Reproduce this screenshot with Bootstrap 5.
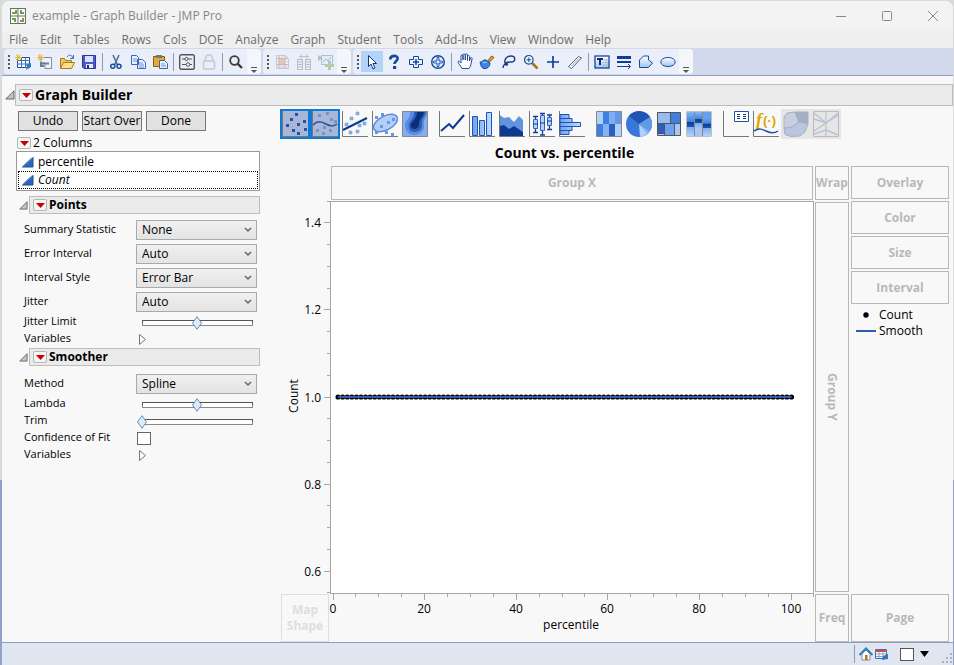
<!DOCTYPE html>
<html lang="en">
<head>
<meta charset="utf-8">
<meta name="viewport" content="width=device-width, initial-scale=1">
<title>example - Graph Builder - JMP Pro</title>
<link href="https://cdn.jsdelivr.net/npm/bootstrap@5.3.0/dist/css/bootstrap.min.css" rel="stylesheet">
<style>
body{font:12px/16px "Open Sans","Noto Sans",sans-serif;color:#000;background:linear-gradient(#d9dade 0 480px,#93a0c8 480px);padding:1px 1px 0 2px}
button{font:inherit;color:inherit;padding:0;border:0;background:none}
svg{display:block;flex:none}
.win{min-height:calc(100vh - 1px);background:#f8f8f8;border-radius:8px 8px 0 0;overflow:hidden}
.titlebar{height:30px;background:#f3f3f3;color:#868686;padding-left:8px;gap:6px}
.titlebar button{width:40px;height:30px}
.menus{height:17px;background:#efefef;padding-left:7px;gap:12px}
.menus a{color:#6d6d6d;text-decoration:none}
.toolbars{height:28px;background:#d3d9ec;border-bottom:1px solid #8f9cc4;gap:2px;padding-left:2px}
.tb{height:25px;background:#e9eef8;border-radius:4px;margin-top:1px}
.tb button{width:22px;height:21px}
.tb .on{background:#b3d3f8}
.tb .off{opacity:.4}
.grip{width:8px;height:14px;background:repeating-linear-gradient(#555 0 2px,transparent 2px 4px) 4px 0/2px 14px no-repeat}
.vsep{width:5px;height:18px;background:linear-gradient(#8e9ab8,#8e9ab8) 2px 0/1px 18px no-repeat}
.tb .more{width:14px;height:25px;background:#f3f6fb;border-radius:0 4px 4px 0}
.workarea{padding:8px 0 0 3px}
.outline-bar{background:#ebebeb;border:1px solid #bdbdbd;font-weight:700;gap:2px;padding-left:3px}
.outline-bar.big{height:22px;font-size:14px}
.outline-bar.sub{height:18px;font-size:12px}
.subhead{padding-left:2px;gap:1px}
.redtri{width:14px;height:12px;border:1px solid #b5b5b5;border-radius:2px;background:#f4f4f4;display:flex;align-items:center;justify-content:center}
.side{width:243px;margin-left:12px}
.pushes{padding:5px 0 4px 1px}
.pushbtn{width:60px;height:20px;background:#e1e1e1;border:1px solid #777;line-height:16px;white-space:nowrap}
.colhead{gap:2px}
.cols-list{border:1px solid #999;background:#fff;margin:0 0 5px -1px;padding:1px}
.cols-list button{height:18px;padding-left:3px;gap:4px;text-align:left}
.cols-list .cur{border:1px dotted #000;font-style:italic;padding-left:2px}
.smoothprops{padding-top:6px}
.prop{padding-left:7px;height:24px}
.prop.thin{height:17px}
.prop label,.prop .lab{width:112px;font-size:11px;line-height:14px;padding-bottom:3px;white-space:nowrap}
.prop button{margin-left:2px}
.prop select{width:121px;height:20px;border:1px solid #a9a9a9;border-radius:0;color:#000;font:12px/16px "Open Sans",sans-serif;padding:0 0 0 5px;appearance:none;background:url("data:image/svg+xml,%3Csvg xmlns='http://www.w3.org/2000/svg' width='8' height='6'%3E%3Cpath d='M1 1l3 3 3-3' fill='none' stroke='%23666' stroke-width='1.5'/%3E%3C/svg%3E") right 4px center no-repeat,linear-gradient(#f0f0f0,#e3e3e3)}
.prop input[type=range]{appearance:none;width:122px;height:14px;margin:0;background:linear-gradient(#fff,#fff) center/calc(100% - 13px) 4px no-repeat,linear-gradient(#555 0 3px,#888 3px) center/calc(100% - 11px) 6px no-repeat}
.prop input[type=range]::-webkit-slider-thumb{appearance:none;width:12px;height:14px;background:url("data:image/svg+xml,%3Csvg xmlns='http://www.w3.org/2000/svg' width='12' height='14'%3E%3Cpath d='M6 .7L10.500 7 6 13.300 1.500 7z' fill='%23dcebf9' stroke='%236e8fb3'/%3E%3C/svg%3E")}
.prop input[type=checkbox]{appearance:none;width:14px;height:13px;border:1px solid #666;background:#fff;margin:0 0 0 1px}
.graph{margin-left:20px;margin-right:4px;min-width:0}
.elems{height:34px;padding-top:3px}
.elems button{width:30px;height:30px;padding:2px}
.elems .on{background:#a9b6d6;outline:2px solid #0f7ad6;outline-offset:-2px}
.elems .off{background:#e6e6e6}
.elems .gapr{margin-right:7px}
.gtitle{font-size:14px;line-height:20px;font-weight:700;margin:0 100px 0 0;padding:3px 0}
.zones{display:grid;grid-template-columns:48px minmax(0,1fr) 34px 98px;grid-template-rows:34px 1fr 48px;gap:2px;margin-left:1px}
.zone{border:1px solid #b8b8b8;color:#b8b8b8;font-weight:700;display:flex;align-items:center;justify-content:center;text-align:center}
.z-map{grid-column:1;grid-row:3;border-color:#dedede;color:#dedede}
.z-x{grid-column:2;grid-row:1}
.z-wrap{grid-column:3;grid-row:1}
.z-y{grid-column:3;grid-row:2;writing-mode:vertical-rl}
.z-freq{grid-column:3;grid-row:3}
.z-page{grid-column:4;grid-row:3}
.z-right{grid-column:4;grid-row:1/3;gap:2px}
.z-right .zone{height:33px}
.legend-list{line-height:16px;padding:1px 0 0 5px}
.legend-list svg{margin-right:3px}
.plot{grid-column:1/3;grid-row:2/4;width:100%;height:auto;overflow:visible}
.plot text{font:12px "Open Sans",sans-serif}
.status{height:23px;background:#dfe6f0;border-top:1px solid #8f9cc4;gap:2px}
.winpick{appearance:none;width:14px;height:13px;border:1px solid #555;background:#fff;margin:0 4px 0 10px}
.sizer{margin-left:8px}
</style>
</head>
<body>
<svg width="0" height="0" class="position-absolute" aria-hidden="true">
 <defs>
  <linearGradient id="b" x2="0" y2="1"><stop stop-color="#fff"/><stop offset="1" stop-color="#9cc4f5"/></linearGradient>
  <linearGradient id="hb" x2="1" y2="0"><stop stop-color="#6ea1f0"/><stop offset="1" stop-color="#c4dcff"/></linearGradient>
  <linearGradient id="st" x2="0" y2="1"><stop stop-color="#84b5f7"/><stop offset=".4" stop-color="#3f83dd"/><stop offset=".42" stop-color="#0b3c8c"/><stop offset=".62" stop-color="#1d56b0"/><stop offset=".64" stop-color="#7fadf0"/><stop offset="1" stop-color="#b4d1fb"/></linearGradient>
  <symbol id="tri" viewBox="0 0 10 10"><path d="M9 .8V9H.8z" fill="#c4c4c4" stroke="#666"/></symbol>
  <symbol id="red" viewBox="0 0 9 5"><path d="M0 0h9L4.500 5z" fill="#c80000"/></symbol>
  <symbol id="cont" viewBox="0 0 13 12"><path d="M12 1v10H1z" fill="#2f66b5" stroke="#1f4c90"/><path d="M1 11L12 1" stroke="#78aee8"/></symbol>
  <symbol id="play" viewBox="0 0 9 13"><path d="M1.500 1.500L7.500 6.500l-6 5z" fill="#fafafa" stroke="#777"/></symbol>
  <symbol id="ov" viewBox="0 0 8 8"><path d="M1 1.500h6" stroke="#555"/><path d="M1 4h6L4 7z" fill="#555"/></symbol>
 </defs>
</svg>
<div class="win d-flex flex-column">
 <header class="titlebar d-flex align-items-center">
  <svg width="16" height="16" viewBox="0 0 16 16"><rect x=".5" y=".5" width="15" height="15" fill="#fff" stroke="#6d6d6d"/><path d="M8 0v16M0 8h16" stroke="#6d6d6d"/><path d="M5 2h2v4H2V4h3zM10 2h2v2h2v2h-4zM2 10h4v4H4v-2H2zM12 10h2v4h-4v-2h2z" fill="#6fa43c"/></svg>
  <span class="me-auto">example - Graph Builder - JMP Pro</span>
  <button aria-label="Minimize"><svg class="m-auto" width="12" height="12"><path d="M1 6.500h10" stroke="#888"/></svg></button>
  <button aria-label="Maximize"><svg class="m-auto" width="12" height="12"><rect x="1.500" y="1.500" width="9" height="9" rx="1" fill="none" stroke="#888"/></svg></button>
  <button aria-label="Close"><svg class="m-auto" width="12" height="12"><path d="M1 1l10 10M11 1L1 11" stroke="#888"/></svg></button>
 </header>
 <nav class="menus d-flex align-items-center">
  <a href="#">File</a><a href="#">Edit</a><a href="#">Tables</a><a href="#">Rows</a><a href="#">Cols</a><a href="#">DOE</a><a href="#">Analyze</a><a href="#">Graph</a><a href="#">Student</a><a href="#">Tools</a><a href="#">Add-Ins</a><a href="#">View</a><a href="#">Window</a><a href="#">Help</a>
 </nav>
 <div class="toolbars d-flex">
  <div class="tb d-flex align-items-center"><span class="grip"></span>
   <button aria-label="New data table"><svg class="m-auto" width="16" height="16"><path d="M2.500 3.500h12v10h-12z" fill="#fff" stroke="#1c4c94"/><path d="M2 6.500h13M2 10h13M6.500 3v11M10.500 3v11" stroke="#3b70b8"/><path d="M3 0v7M0 3.500h7M1 1l5 5M6 1L1 6" stroke="#e8b820"/><path d="M11 16l1-4-2-1 6-2v4z" fill="#2f78c0"/></svg></button>
   <button aria-label="New script"><svg class="m-auto" width="16" height="16"><path d="M4 3.500h10.500v11H8V9H4z" fill="#eef3fa" stroke="#7c8ea8"/><path d="M4 9.500h8M4 8v4h3" stroke="#6a7e9c" stroke-width="2" fill="none"/><path d="M3 0v7M0 3.500h7M1 1l5 5M6 1L1 6" stroke="#e8b820"/></svg></button>
   <button aria-label="Open"><svg class="m-auto" width="16" height="16"><path d="M1.500 14V4.500h4l1 2h6V14z" fill="#f2c65a" stroke="#a87b1c"/><path d="M1.500 14.500L4.500 8.500h11L12.500 14.500z" fill="#fbe08c" stroke="#a87b1c"/><path d="M8 3c2-3 5-2 6 1M14.500 1v3.500H11" stroke="#3a6fae" fill="none"/></svg></button>
   <button aria-label="Save"><svg class="m-auto" width="16" height="16"><path d="M1.500 1.500h13v13H3L1.500 13z" fill="#4a58c8" stroke="#2d3796"/><path d="M4 2h8v6H4z" fill="#d5e4fb"/><path d="M5 10h7v4H5z" fill="#e8e8f4"/><path d="M6 11h2v3H6z" fill="#222b7c"/></svg></button>
   <span class="vsep"></span>
   <button aria-label="Cut"><svg class="m-auto" width="16" height="16" fill="none"><path d="M5 1l4.500 10M11 1L6.500 11" stroke="#55708f" stroke-width="1.600"/><circle cx="4.800" cy="12.300" r="2" stroke="#174c9c" stroke-width="1.500"/><circle cx="11" cy="12.300" r="2" stroke="#174c9c" stroke-width="1.500"/></svg></button>
   <button aria-label="Copy"><svg class="m-auto" width="16" height="16"><path d="M1.500 1.500h5l2 2v7h-7zM7.500 5.500h5l3 3v6h-8z" fill="#e8f1ff" stroke="#3468b4"/><path d="M3 5h4M3 7h4M9 9h4M9 11h5M9 13h5" stroke="#6a98d8"/></svg></button>
   <button aria-label="Paste"><svg class="m-auto" width="16" height="16"><path d="M1.500 2.500h11v10h-11z" fill="#e8a838" stroke="#8c5c10"/><path d="M4 1h6v3H4z" fill="#777"/><path d="M7.500 6.500h5l3 3v5h-8z" fill="#e8f1ff" stroke="#4a6288"/><path d="M9 10h4M9 12h5" stroke="#6a98d8"/></svg></button>
   <span class="vsep"></span>
   <button aria-label="Column switcher"><svg class="m-auto" width="16" height="16" fill="none" stroke="#555"><rect x=".7" y=".7" width="14.600" height="14.600" rx="1.500" stroke-width="1.400"/><path d="M3 5h3M9 5h4M3 10.500h4M11 10.500h2"/><circle cx="7.500" cy="5" r="1.600"/><circle cx="9" cy="10.500" r="1.800"/></svg></button>
   <button aria-label="Lock" disabled><svg class="m-auto" width="16" height="16" fill="none" stroke="#c3c8d2" stroke-width="1.500"><rect x="2.500" y="7" width="11" height="8" rx="1"/><path d="M4.500 7V4.500a3.500 3.500 0 017 0V7"/></svg></button>
   <span class="vsep"></span>
   <button aria-label="Search"><svg class="m-auto" width="16" height="16" fill="none" stroke="#3a3a3a"><circle cx="6.500" cy="6.500" r="4.300" stroke-width="1.800"/><path d="M9.800 9.800L14 14" stroke-width="2.400"/></svg></button>
   <button class="more d-flex align-items-end justify-content-center" aria-label="More"><svg width="8" height="8"><use href="#ov"/></svg></button>
  </div>
  <div class="tb d-flex align-items-center"><span class="grip"></span>
   <button class="off" aria-label="Row selection" disabled><svg class="m-auto" width="16" height="16"><path d="M2.500 1.500h9l3 3v10h-12z" fill="#eef" stroke="#8896b5"/><path d="M5 5h6v5H5z" fill="#f09030"/><path d="M3 4.500h11M3 10.500h11M5 2v12M11 2v12" stroke="#d04848"/><path d="M3 7.500h11M3 13h11M8 2v12" stroke="#7890c0" opacity=".6"/></svg></button>
   <button class="off" aria-label="Compare columns" disabled><svg class="m-auto" width="16" height="16" fill="none" stroke="#6c7a86"><rect x="1.500" y="5.500" width="5" height="10"/><rect x="9.500" y="5.500" width="5" height="10"/><path d="M2 8h4M2 10.500h4M2 13h4M10 8h4M10 10.500h4M10 13h4M3 2.500h10M5 .5v4M11 .5v4"/></svg></button>
   <button class="off" aria-label="Add to graph" disabled><svg class="m-auto" width="16" height="16"><path d="M3.500 1.500h11v9h-11z" fill="#ddebfa" stroke="#5777a0"/><path d="M5 8l3-3 2 2 3-4" stroke="#2f66b5" fill="none"/><path d="M0 1l5 3-5 3z" fill="#5a8f4a"/><path d="M11.500 7v9M7 11.500h9" stroke="#56a02e" stroke-width="3"/></svg></button>
   <button class="more d-flex align-items-end justify-content-center" aria-label="More"><svg width="8" height="8"><use href="#ov"/></svg></button>
  </div>
  <div class="tb d-flex align-items-center"><span class="grip"></span>
   <button class="on" aria-label="Arrow"><svg class="m-auto" width="16" height="16"><path d="M4.500 1.500v11l2.500-2.500 2 5 2-1-2-4.500h3.500z" fill="#fff" stroke="#17347a"/></svg></button>
   <button aria-label="Help"><svg class="m-auto" width="16" height="16" fill="none"><path d="M4.300 5.500C4 1 12 .7 11.700 4.700 11.500 7 8.500 7 8.500 10" stroke="#1546a0" stroke-width="2.600"/><path d="M7 12h3.200v3H7z" fill="#1546a0"/></svg></button>
   <button aria-label="Crosshair box"><svg class="m-auto" width="16" height="16"><path d="M5.500 2.500h5v3h4v5h-4v3h-5v-3h-4v-5h4z" fill="#e8f2ff" stroke="#1546a0"/><path d="M8 5v6M5 8h6" stroke="#1546a0" stroke-width="1.500"/></svg></button>
   <button aria-label="Scroller"><svg class="m-auto" width="16" height="16" fill="none" stroke="#1546a0"><circle cx="8" cy="8" r="6.300" fill="#e8f2ff" stroke-width="1.400"/><path d="M6 6h4v4H6z"/><path d="M8 2.500l2 2H6zM8 13.500l2-2H6zM2.500 8l2-2v4zM13.500 8l-2-2v4z" fill="#1546a0" stroke="none"/></svg></button>
   <span class="vsep"></span>
   <button aria-label="Grabber"><svg class="m-auto" width="17" height="17"><path d="M5 15.500C3 12 1 10 1 8.500c1-1 2 0 3 1.500V3c0-1.500 2-1.500 2 0v4V2c0-1.500 2-1.500 2.300 0v5V2c0-1.500 2.200-1.500 2.200 0v5.500V3.500c0-1.300 2-1.300 2 0V8l1-3c1-1 2 0 1.500 1-1 5-1 7-3 9.500z" fill="#fff" stroke="#244c98"/></svg></button>
   <button aria-label="Brush"><svg class="m-auto" width="16" height="16"><path d="M8 8l4.500-6L15 3.500 9.500 9z" fill="#e2a02c" stroke="#8a5a10"/><path d="M1 8c2 1 3-3 6-2l4 3c0 4-3 6-6 5.500C2 14 2 11 1 8z" fill="#3c84e0" stroke="#174c9c"/><path d="M4 9c2-1 3-1 4 0" stroke="#bcdcff" fill="none"/></svg></button>
   <button aria-label="Lasso"><svg class="m-auto" width="16" height="16" fill="none" stroke="#1f4080" stroke-width="1.400"><path d="M4 9C3 5 6 2 10 2c5 0 5 6 0 6-3 0-6 0-6 2 0 1.500 3 1 2.500 0S2 10 2 14"/></svg></button>
   <button aria-label="Magnifier"><svg class="m-auto" width="16" height="16" fill="none"><path d="M9 9l5.500 5.500" stroke="#a8741c" stroke-width="2.600"/><circle cx="5.800" cy="5.800" r="4.300" fill="#e8f4ff" stroke="#1f4c90" stroke-width="1.200"/><path d="M3.500 5.800h4.600M5.800 3.500v4.600" stroke="#1546a0"/></svg></button>
   <button aria-label="Crosshairs"><svg class="m-auto" width="16" height="16"><path d="M8 2v12M2 8h12" stroke="#123f96" stroke-width="1.700"/></svg></button>
   <button aria-label="Line"><svg class="m-auto" width="16" height="16"><path d="M1.500 12.500l10-10 3 1.500-10 10.500z" fill="#fff" stroke="#4c5f94"/><path d="M4.500 12L12 4.500" stroke="#8c9cc4"/></svg></button>
   <span class="vsep"></span>
   <button aria-label="Annotate"><svg class="m-auto" width="16" height="16"><rect x="1" y="2" width="14" height="12" fill="url(#b)" stroke="#1546a0" stroke-width="1.300"/><path d="M3 4h6v2H7v5H5V6H3z" fill="#102c6c"/><path d="M10 6h4M9 8.500h5M9 11h5" stroke="#a8b4cc"/></svg></button>
   <button aria-label="Lines"><svg class="m-auto" width="16" height="16" fill="none" stroke="#0d3c9c"><path d="M1 3.500h14" stroke-width="3"/><path d="M1 8h14" stroke-width="2"/><path d="M1 12.500h13M12 10l2.500 2.500L12 15"/></svg></button>
   <button aria-label="Polygon"><svg class="m-auto" width="16" height="16"><path d="M1.500 13.500V6l4-4h5v4l4 3-4 4.500z" fill="url(#b)" stroke="#1f4c90"/></svg></button>
   <button aria-label="Oval"><svg class="m-auto" width="16" height="16"><ellipse cx="8" cy="8" rx="7.200" ry="4.600" fill="url(#b)" stroke="#1f4c90"/></svg></button>
   <button class="more d-flex align-items-end justify-content-center" aria-label="More"><svg width="8" height="8"><use href="#ov"/></svg></button>
  </div>
 </div>
 <main class="workarea flex-grow-1">
  <div class="d-flex align-items-center">
   <svg width="10" height="10"><use href="#tri"/></svg>
   <div class="outline-bar big d-flex align-items-center flex-grow-1"><button class="redtri" aria-label="Graph Builder menu"><svg width="9" height="5"><use href="#red"/></svg></button>Graph Builder</div>
  </div>
  <div class="d-flex">
   <section class="side flex-shrink-0">
    <div class="pushes d-flex gap-1"><button class="pushbtn">Undo</button><button class="pushbtn">Start Over</button><button class="pushbtn">Done</button></div>
    <div class="colhead d-flex align-items-center"><button class="redtri" aria-label="Columns menu"><svg width="9" height="5"><use href="#red"/></svg></button>2 Columns</div>
    <div class="cols-list d-flex flex-column"><button class="d-flex align-items-center"><svg width="13" height="12"><use href="#cont"/></svg>percentile</button><button class="cur d-flex align-items-center"><svg width="13" height="12"><use href="#cont"/></svg>Count</button></div>
    <div class="subhead d-flex align-items-center"><svg width="9" height="9"><use href="#tri"/></svg><div class="outline-bar sub d-flex align-items-center flex-grow-1"><button class="redtri" aria-label="Points menu"><svg width="9" height="5"><use href="#red"/></svg></button>Points</div></div>
    <div class="pt-1">
     <div class="prop d-flex align-items-center"><label for="f1">Summary Statistic</label><select id="f1"><option>None</option></select></div>
     <div class="prop d-flex align-items-center"><label for="f2">Error Interval</label><select id="f2"><option>Auto</option></select></div>
     <div class="prop d-flex align-items-center"><label for="f3">Interval Style</label><select id="f3"><option>Error Bar</option></select></div>
     <div class="prop d-flex align-items-center"><label for="f4">Jitter</label><select id="f4"><option>Auto</option></select></div>
     <div class="prop thin d-flex align-items-center"><label for="f5">Jitter Limit</label><input id="f5" type="range" value="50"></div>
     <div class="prop thin d-flex align-items-center"><span class="lab">Variables</span><button aria-label="Expand variables"><svg width="9" height="13"><use href="#play"/></svg></button></div>
    </div>
    <div class="subhead d-flex align-items-center"><svg width="9" height="9"><use href="#tri"/></svg><div class="outline-bar sub d-flex align-items-center flex-grow-1"><button class="redtri" aria-label="Smoother menu"><svg width="9" height="5"><use href="#red"/></svg></button>Smoother</div></div>
    <div class="smoothprops">
     <div class="prop d-flex align-items-center"><label for="s1">Method</label><select id="s1"><option>Spline</option></select></div>
     <div class="prop thin d-flex align-items-center"><label for="s2">Lambda</label><input id="s2" type="range" value="50"></div>
     <div class="prop thin d-flex align-items-center"><label for="s3">Trim</label><input id="s3" type="range" value="0"></div>
     <div class="prop thin d-flex align-items-center"><label for="s4">Confidence of Fit</label><input id="s4" type="checkbox"></div>
     <div class="prop thin d-flex align-items-center"><span class="lab">Variables</span><button aria-label="Expand variables"><svg width="9" height="13"><use href="#play"/></svg></button></div>
    </div>
   </section>
   <section class="graph flex-grow-1">
    <div class="elems d-flex">
     <button class="on" aria-label="Points"><svg width="26" height="26"><path d="M.5 0v25.500H26" fill="none" stroke="#777"/><path d="M13 2h3v3h-3zM8 7h3v3H8zM21 9h3v3h-3zM4 13h3v3H4zM15 12h3v3h-3zM10 18h3v3h-3zM22 17h3v3h-3zM15 21h3v3h-3z" fill="#1f56b0"/></svg></button>
     <button class="on" aria-label="Smoother"><svg width="26" height="26"><path d="M.5 0v25.500H26" fill="none" stroke="#777"/><path d="M14 1h3v3h-3zM6 3h3v3H6zM18 7h3v3h-3zM22 9h3v3h-3zM4 18h3v3H4zM11 15h3v3h-3zM17 18h3v3h-3zM10 21h3v3h-3z" fill="#6f94cf"/><path d="M1 14c5-5 9-3 13-1s7 3 11 0" fill="none" stroke="#2453a0" stroke-width="1.500"/></svg></button>
     <button aria-label="Line of fit"><svg width="26" height="26"><path d="M.5 0v25.500H26" fill="none" stroke="#777"/><path d="M14 1h3v3h-3zM8 6h3v3H8zM3 12h3v3H3zM21 11h3v3h-3zM16 13h3v3h-3zM7 20h3v3H7zM14 19h3v3h-3z" fill="#8cb3ee" stroke="#6d96d8" stroke-width=".5"/><path d="M1 19L25 7" stroke="#0d3a8e" stroke-width="2"/></svg></button>
     <button aria-label="Ellipse"><svg width="26" height="26"><path d="M.5 0v25.500H26" fill="none" stroke="#777"/><ellipse cx="13.500" cy="12" rx="13" ry="7" transform="rotate(-28 13.500 12)" fill="#b5cef7" stroke="#5b8be0" stroke-width="1.500"/><path d="M9 2h3v3H9zM3 5h3v3H3zM20 7h3v3h-3zM15 10h3v3h-3zM8 14h3v3H8zM3 20h3v3H3zM13 20h3v3h-3zM19 22h3v3h-3z" fill="#6598e8"/></svg></button>
     <button class="gapr" aria-label="Contour"><svg width="26" height="26"><path d="M.5.500h25v25H.5z" fill="#86adf0" stroke="#888"/><path d="M8 1h17c0 5-4 8-3 14 0 6-5 9-10 9S3 20 3 14 9 8 8 1z" fill="#5b8be0"/><path d="M12 1h12c-1 5-5 7-4 13 0 5-4 7-8 7s-6-4-5-8 6-6 5-12z" fill="#2a5db8"/><path d="M15 1h7c-1 5-5 7-5 12 0 4-3 5-5 5s-4-3-3-5 6-6 6-12z" fill="#0a2f78"/></svg></button>
     <button aria-label="Line"><svg width="26" height="26"><path d="M.5 0v25.500H26" fill="none" stroke="#777"/><path d="M2 20l8-7 4 4L25 4" fill="none" stroke="#0d3a8e" stroke-width="2"/></svg></button>
     <button aria-label="Bar"><svg width="26" height="26"><path d="M.5 0v25.500H26" fill="none" stroke="#777"/><path d="M3.500 5.500h5v19h-5zM10.500 9.500h5v15h-5zM17.500 1.500h5v23h-5z" fill="url(#hb)" stroke="#1c54b4"/></svg></button>
     <button aria-label="Area"><svg width="26" height="26"><path d="M.5 0v25.500H26" fill="none" stroke="#777"/><path d="M1 4l4 3 5-1 5 5 5-6 4 4v16H1z" fill="#5f95e0"/><path d="M1 15l4-1 5 4 5-3 9 6v4H1z" fill="#0d3a8e"/></svg></button>
     <button aria-label="Box plot"><svg width="26" height="26"><path d="M.5 0v25.500H26" fill="none" stroke="#777"/><path d="M6.500 5v17M13.500 2v22M20.500 4v15M4 5.500h5M4 21.500h5M11 2.500h5M11 24h5M18 4h5M18 18.500h5" stroke="#123f96" stroke-width="1.300"/><path d="M4.500 8.500h4v9h-4zM11.500 4.500h4v15h-4zM18.500 6.500h4v8h-4z" fill="#b5d0fb" stroke="#2c64c4"/><path d="M4 13h5M11 12h5M18 10h5" stroke="#123f96"/></svg></button>
     <button class="gapr" aria-label="Histogram"><svg width="26" height="26"><path d="M.5 0v25.500H26" fill="none" stroke="#777"/><path d="M1 3.500h9v4H1zM1 7.500h12v4H1zM1 11.500h20.500v4H1zM1 15.500h12v4H1zM1 19.500h9v4H1z" fill="url(#hb)" stroke="#1c54b4"/></svg></button>
     <button aria-label="Heatmap"><svg width="26" height="26"><path d="M1 1h6v12H1z" fill="#b0cffb"/><path d="M7 1h6v12H7zM1 13h6v12H1zM13 13h6v12h-6z" fill="#3f7fe0"/><path d="M13 1h6v12h-6z" fill="#80acf2"/><path d="M19 1h6v12h-6z" fill="#6798e6"/><path d="M7 13h6v12H7z" fill="#86b2f5"/><path d="M13 13h6v12h-6z" fill="#2b60be"/><path d="M19 13h6v12h-6z" fill="#b0cffb"/><path d="M.5.500h25v25H.5z" fill="none" stroke="#888"/></svg></button>
     <button aria-label="Pie"><svg width="26" height="26"><circle cx="13" cy="13" r="13" fill="#3977d8"/><path d="M13 13L3 5A13 13 0 0124 6z" fill="#1f54b4"/><path d="M13 13L24 6a13 13 0 010 14z" fill="#5f9be4"/><path d="M13 13l11 7a13 13 0 01-3 3z" fill="#7db0f0"/><path d="M13 13l8.500 9.500A13 13 0 0114 26z" fill="#b0cffb"/></svg></button>
     <button aria-label="Treemap"><svg width="26" height="26"><path d="M1.500 1.500h13v11h-13z" fill="#98bcf2"/><path d="M14.500 1.500h10v11h-10z" fill="#3f7fe0"/><path d="M1.500 12.500h7v10h-7z" fill="#2b60be"/><path d="M1.500 22h7v3h-7zM19 12.500h6v12h-6z" fill="#a8c6f5"/><path d="M8.500 12.500h10v12h-10z" fill="#6da0f5"/><path d="M1.500 1.500h23v23h-23zM1 12.500h24M14.500 1v11M8.500 12v12M18.500 12v12M1 22.500h7" fill="none" stroke="#555"/></svg></button>
     <button class="gapr" aria-label="Mosaic"><svg width="26" height="26"><path d="M.5.500h25v25H.5z" fill="#888"/><path d="M1 1h7v24H1z" fill="url(#st)"/><path d="M9 1h7v18H9z" fill="url(#st)"/><path d="M9 17h7v8H9z" fill="#a8c6f5"/><path d="M17 4h8v21h-8z" fill="url(#st)"/><path d="M17 1h8v6h-8z" fill="#6a9eec"/></svg></button>
     <button aria-label="Caption box"><svg width="26" height="26"><path d="M.5 0v25.500H26" fill="none" stroke="#777"/><path d="M11.500.500h14v10h-14z" fill="#fff" stroke="#1c54b4"/><path d="M14 3.500h3M20 3.500h3M14 5.500h3M20 5.500h3M14 7.500h3M20 7.500h3" stroke="#1c3c7c"/></svg></button>
     <button aria-label="Formula"><svg width="26" height="26"><path d="M.5 0v25.500H26" fill="none" stroke="#777"/><text x="3" y="15" font-family="Liberation Serif,serif" font-size="18" font-weight="700" font-style="italic" fill="#dba800">f</text><text x="10" y="14" font-family="Liberation Sans,sans-serif" font-size="13" font-weight="700" fill="#dba800">(·)</text><path d="M1 20c5-3 8-2 12 0s8 3 12 0" fill="none" stroke="#2453b0" stroke-width="1.500"/></svg></button>
     <button class="off" aria-label="Map shapes" disabled><svg width="26" height="26" stroke="#aab0ba"><path d="M1 6l3-4 8-1 4 10-7 5-8 1z" fill="#c7cfe0"/><path d="M12 1h13v12l-9-2z" fill="#a4afc4"/><path d="M1 17l8-1 7-5 9 2-3 8-5 4-9 .5-6-2z" fill="#b9c6df"/></svg></button>
     <button class="off" aria-label="Parallel plot" disabled><svg width="26" height="26" fill="none"><path d="M1 2l12 10L25 4M1 8l12 4L25 2M1 23l12-4 12 5M1 20l12-8" stroke="#b8c3d8" stroke-width="1.500"/><path d="M.5.500h25v25H.5zM13 0v26" stroke="#bbb"/></svg></button>
    </div>
    <h1 class="gtitle text-center">Count vs. percentile</h1>
    <div class="zones">
     <svg class="plot" id="plot" viewBox="0 0 532 440" role="img" aria-label="Count vs. percentile"></svg>
     <div class="zone z-map">Map<br>Shape</div>
     <div class="zone z-x">Group X</div>
     <div class="zone z-wrap">Wrap</div>
     <div class="zone z-y">Group Y</div>
     <div class="zone z-freq">Freq</div>
     <div class="z-right d-flex flex-column">
      <div class="zone">Overlay</div><div class="zone">Color</div><div class="zone">Size</div><div class="zone">Interval</div>
      <div class="legend-list">
       <div class="d-flex align-items-center"><svg width="20" height="6"><circle cx="10" cy="3" r="2.700"/></svg>Count</div>
       <div class="d-flex align-items-center"><svg width="20" height="6"><path d="M0 3h20" stroke="#2f5bb0" stroke-width="2"/></svg>Smooth</div>
      </div>
     </div>
     <div class="zone z-page">Page</div>
    </div>
   </section>
  </div>
 </main>
 <footer class="status d-flex align-items-center justify-content-end">
  <span class="vsep"></span>
  <svg width="14" height="14"><path d="M3 7v6h8V7L7 3z" fill="#fff" stroke="#88a"/><path d="M.5 8L7 1.500 13.500 8" fill="none" stroke="#2f86b4" stroke-width="2"/><path d="M6 8h2.500v5H6z" fill="#b07828"/></svg>
  <svg width="13" height="13"><path d="M.5 1.500h11v9H.5z" fill="#fff" stroke="#3f6cae"/><path d="M0 3h12" stroke="#c85050" stroke-width="2"/><path d="M1 6h10M1 8.500h10M4 4v6M8 4v6" stroke="#86a4cf"/><path d="M7 12l1-4 5-2v5z" fill="#2f78c0"/></svg>
  <input class="winpick" type="checkbox" aria-label="Current window">
  <button aria-label="Window list"><svg width="9" height="6"><path d="M0 0h9L4.500 6z"/></svg></button>
  <svg class="sizer align-self-end" width="14" height="14" fill="#a9b3c6"><path d="M11 2h2v2h-2zM7 6h2v2H7zM11 6h2v2h-2zM3 10h2v2H3zM7 10h2v2H7zM11 10h2v2h-2z"/></svg>
 </footer>
</div>
<script src="https://cdn.jsdelivr.net/npm/bootstrap@5.3.0/dist/js/bootstrap.bundle.min.js"></script>
<script>
const X = v => 52.500 + v * 4.58, Y = v => 195.500 + (1 - v) * 435;
let out = '<rect x="49.5" y="-0.5" width="483" height="392" fill="#fff" stroke="#a6a6a6"/>', ticks = '';
for (let i = 0; i <= 18; i++) {
  const y = Math.round(Y(0.55 + i * 0.05)) - 0.5, major = i % 4 === 1;
  ticks += `M49 ${y}h${major ? -6 : -3}`;
  if (major) out += `<text x="40" y="${y + 4.5}" text-anchor="end">${(0.55 + i * 0.05).toFixed(1)}</text>`;
}
for (let i = 0; i <= 21; i++) {
  const x = Math.round(X(i * 5)) - 0.5, major = i % 4 === 0;
  ticks += `M${x} 392v${major ? 6 : 3}`;
  if (major) out += `<text x="${x - 0.5}" y="411" text-anchor="middle">${i * 5}</text>`;
}
out += `<path d="${ticks}" stroke="#a6a6a6"/>`;
for (let p = 1; p <= 100; p++) out += `<circle cx="${X(p)}" cy="195" r="2.600"/>`;
out += `<path d="M${X(1)} 195H${X(100)}" stroke="#2f5bb0" stroke-width="2"/>`;
out += '<text x="290" y="427" text-anchor="middle">percentile</text><text transform="translate(17 194) rotate(-90)" text-anchor="middle">Count</text>';
document.getElementById('plot').innerHTML = out;
</script>
</body>
</html>
